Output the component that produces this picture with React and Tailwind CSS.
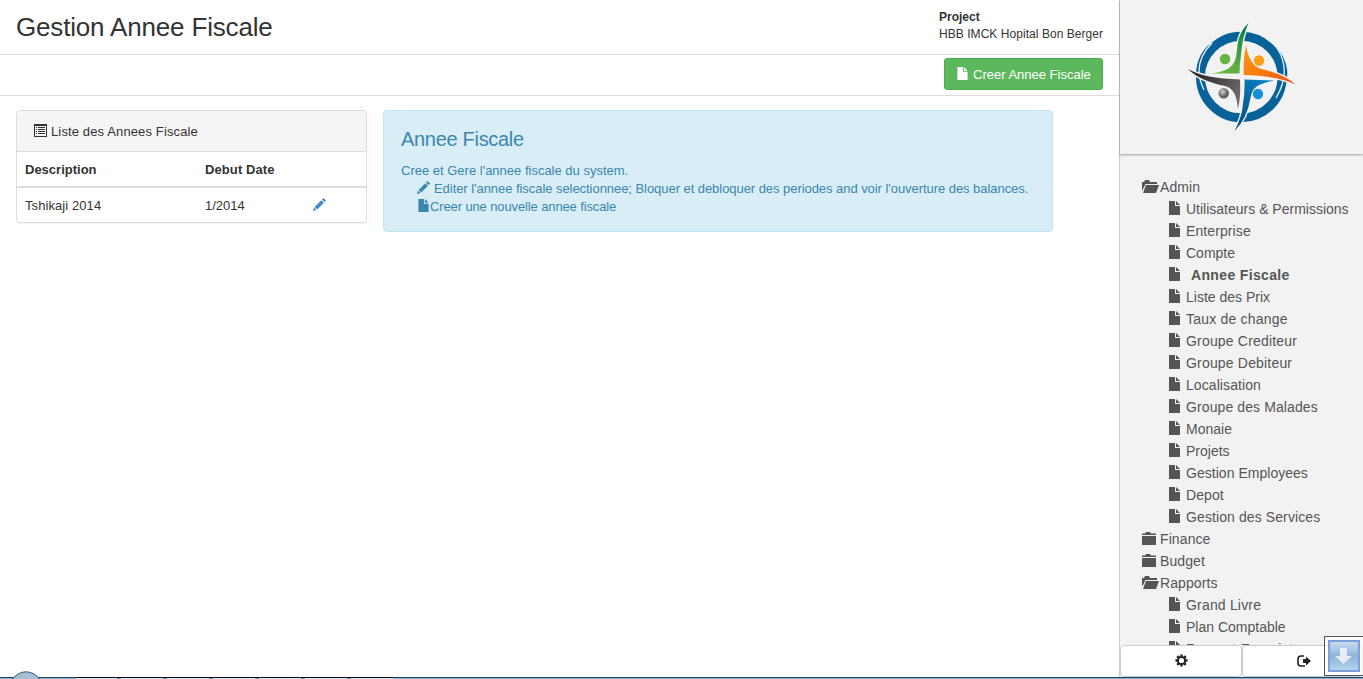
import React from 'react';

const FILE_ITEMS = [
  ['Utilisateurs & Permissions', ''],
  ['Enterprise', 'tracking-[0.1px]'],
  ['Compte', ''],
  ['Annee Fiscale', 'font-bold tracking-[0.35px] pl-[5px]'],
  ['Liste des Prix', ''],
  ['Taux de change', 'tracking-[0.2px]'],
  ['Groupe Crediteur', 'tracking-[0.18px]'],
  ['Groupe Debiteur', 'tracking-[0.18px]'],
  ['Localisation', 'tracking-[0.08px]'],
  ['Groupe des Malades', 'tracking-[0.1px]'],
  ['Monaie', ''],
  ['Projets', ''],
  ['Gestion Employees', 'tracking-[0.03px]'],
  ['Depot', 'tracking-[0.1px]'],
  ['Gestion des Services', 'tracking-[0.1px]'],
];

const REPORT_ITEMS = [
  ['Grand Livre', 'tracking-[0.18px]'],
  ['Plan Comptable', ''],
  ['Rapport Enregistrement', 'tracking-[0.1px]'],
];

function FileIcon({ className = '' }) {
  return (
    <svg className={`h-[14px] w-[11px] shrink-0 ${className}`} viewBox="0 0 11 14" fill="currentColor">
      <path d="M0 0h6v5h5v9H0z" />
      <path d="M7 0L11 4H7z" />
    </svg>
  );
}

function FolderOpen() {
  return (
    <svg className="-mt-[1px] h-[13px] w-[17px] shrink-0" viewBox="0 0 17 13" fill="currentColor">
      <path d="M0 10V2h2L3 0h4l1 2h7V4H3.500L0.500 10z" />
      <path d="M4 5h13l-3 8H1z" />
    </svg>
  );
}

function FolderClosed() {
  return (
    <svg className="-mt-[1px] h-[13px] w-[17px] shrink-0" viewBox="0 0 17 13" fill="currentColor">
      <path d="M0 3V1.500h3L4 0h4l1 1.500h5V3z" />
      <path d="M0 4h14v9H0z" />
    </svg>
  );
}

function Pencil({ className = '' }) {
  return (
    <svg className={`h-[13px] w-[13px] shrink-0 ${className}`} viewBox="0 0 13 13" fill="currentColor">
      <path d="M0 13L1 9.500L3.500 12z" />
      <path d="M1.600 8.900L8.300 2.200L10.900 4.800L4.200 11.500z" />
      <path d="M9 1.500L10.500 0L13 2.500L11.500 4.100z" />
    </svg>
  );
}

function ListIcon() {
  return (
    <svg className="-mt-[1px] h-[13px] w-[13px] shrink-0" viewBox="0 0 13 13">
      <path d="M0 0h13v13H0zM1 2v10h11V2z" fill="#333" fillRule="evenodd" />
      <path d="M2 3h1v1H2zM2 5h1v1H2zM2 7h1v1H2zM2 9h1v1H2zM4 3h7v1H4zM4 5h7v1H4zM4 7h7v1H4zM4 9h7v1H4z" fill="#333" />
    </svg>
  );
}

function Logo() {
  return (
    <svg className="h-[110px] w-[110px]" viewBox="1187 22 110 110">
      <defs>
        <linearGradient id="lg-green" x1="0" y1="1" x2="0.700" y2="0">
          <stop offset="0" stopColor="#72bf44" />
          <stop offset="0.500" stopColor="#58a83f" />
          <stop offset="1" stopColor="#008444" />
        </linearGradient>
        <linearGradient id="lg-orange" x1="0" y1="0" x2="1" y2="1">
          <stop offset="0" stopColor="#f89c1c" />
          <stop offset="0.500" stopColor="#f97a0c" />
          <stop offset="1" stopColor="#e94e1b" />
        </linearGradient>
        <linearGradient id="lg-grey" x1="0" y1="0" x2="1" y2="0.500">
          <stop offset="0" stopColor="#1c1a1b" />
          <stop offset="1" stopColor="#696567" />
        </linearGradient>
        <linearGradient id="lg-blue" x1="0.700" y1="0" x2="0" y2="1">
          <stop offset="0" stopColor="#0b7cc0" />
          <stop offset="1" stopColor="#024a78" />
        </linearGradient>
        <radialGradient id="lg-ball" cx="0.400" cy="0.350">
          <stop offset="0" stopColor="#d0d0d0" />
          <stop offset="1" stopColor="#5d5d5d" />
        </radialGradient>
      </defs>
      <circle cx="1241.300" cy="77" r="40.800" fill="none" stroke="#08629a" strokeWidth="9" />
      <path d="M1212 42Q1193 57 1197 82Q1200 52 1212 42z" fill="#05659b" />
      <path d="M1277 48Q1291 65 1286 83Q1286 62 1277 48z" fill="#05659b" />
      <path d="M1212 43Q1191 64 1204 90M1277 48Q1292 71 1276 98" fill="none" stroke="#f2f2f2" strokeWidth="1.300" />
      <g stroke="#f2f2f2" strokeWidth="2.800" paintOrder="stroke">
        <path d="M1248.500 23Q1239 32 1237.500 45C1236 61 1236 71 1210 73.500H1239.500Q1239.500 64 1241 55Q1242 37 1248.500 23z" fill="url(#lg-green)" />
        <path d="M1246 45Q1249 65 1261 69Q1284 74 1295.500 84.500Q1279 76 1243.800 75Q1243 58 1246 45z" fill="url(#lg-orange)" />
        <path d="M1188 69Q1204 78.500 1240 79.500Q1241 98 1237.800 109Q1237 89 1225 86Q1200 81 1188 69z" fill="url(#lg-grey)" />
        <path d="M1244.500 79.500L1274 80.500C1253 85 1253 89 1250.500 98Q1247 119 1234.500 131Q1242 117 1243 104Q1245 92 1244.500 79.500z" fill="url(#lg-blue)" />
      </g>
      <circle cx="1225" cy="59" r="5.200" fill="#65b544" />
      <circle cx="1259" cy="60.500" r="5.200" fill="#fba014" />
      <circle cx="1223.700" cy="93.300" r="5.200" fill="url(#lg-ball)" />
      <circle cx="1258" cy="94" r="5.200" fill="#1292d6" />
    </svg>
  );
}

function Gear() {
  return (
    <svg className="-mt-[1px] ml-[2px] h-[13px] w-[13px]" viewBox="0 0 13 13">
      <circle cx="6.500" cy="6.500" r="3.600" fill="none" stroke="#222" strokeWidth="2" />
      <path d="M6.500 0.500v2M6.500 10.500v2M0.500 6.500h2M10.500 6.500h2M2.200 2.200l1.500 1.500M9.300 9.300l1.500 1.500M2.200 10.800l1.500-1.500M9.300 3.700l1.500-1.500" stroke="#222" strokeWidth="2.400" />
    </svg>
  );
}

function Logout() {
  return (
    <svg className="-mt-[1px] ml-[3px] h-[12px] w-[14px]" viewBox="0 0 14 12">
      <path d="M7 1H4Q1 1 1 4V8Q1 11 4 11H8" fill="none" stroke="#222" strokeWidth="1.600" />
      <path d="M6 4h3V1.500l5 4.500l-5 4.500V8H6z" fill="#222" />
    </svg>
  );
}

function FileRow({ label, cls }) {
  return (
    <li className="flex h-[22px] items-center pl-[49px]">
      <FileIcon className="-mt-[3px] mr-[6px]" />
      <span className={`whitespace-nowrap ${cls}`}>{label}</span>
    </li>
  );
}

function FolderRow({ label, open }) {
  return (
    <li className="flex h-[22px] items-center pl-[22px]">
      <span className="flex w-[18px]">{open ? <FolderOpen /> : <FolderClosed />}</span>
      <span className="tracking-[0.1px]">{label}</span>
    </li>
  );
}

function Taskbar() {
  return (
    <svg className="absolute bottom-0 left-0 h-[8px] w-full" viewBox="0 0 1363 8" preserveAspectRatio="none">
      <path d="M0 5h1363v1H0z" fill="#1d4568" opacity="0" />
      <path d="M0 6h1363v1H0z" fill="#1d4568" />
      <path d="M0 7h1363v1H0z" fill="#83b4d6" />
      <path d="M76 6h317v1H76z" fill="#0a1118" />
      <path d="M76 7h317v1H76z" fill="#dcebf5" />
      <path d="M117 7h4v1h-4zM163 7h4v1h-4zM209 7h4v1h-4zM255 7h4v1h-4zM301 7h4v1h-4zM347 7h4v1h-4z" fill="#6b93ad" />
      <path d="M12 8.500Q18 0.800 26 0.800Q34 0.800 40 8.500z" fill="#a9bfd0" stroke="#2c5f8c" />
    </svg>
  );
}

export default function App() {
  return (
    <div className="relative flex h-[679px] w-[1363px] overflow-hidden bg-white font-['Liberation_Sans',Arial,sans-serif] text-[13px] text-[#333]">
      <main className="min-w-0 flex-1">
        <header className="flex h-[55px] justify-between border-b border-[#ddd] pl-4 pr-4">
          <h1 className="text-[26px] leading-[54px] tracking-[-0.17px]">Gestion Annee Fiscale</h1>
          <div className="w-[164px] whitespace-nowrap pt-[9px] text-[12px] leading-[17px]">
            <div className="font-bold">Project</div>
            <div className="tracking-[0.05px]">HBB IMCK Hopital Bon Berger</div>
          </div>
        </header>
        <div className="flex h-[41px] justify-end border-b border-[#ddd] pr-4 pt-[3px]">
          <button className="flex h-[32px] w-[159px] items-center rounded-[3px] border border-[#4cae4c] bg-[#5cb85c] pl-[12px] text-[13px] text-white">
            <FileIcon className="-mt-[2px] mr-[5px] !h-[13px]" />
            <span className="whitespace-nowrap pt-px">Creer Annee Fiscale</span>
          </button>
        </div>
        <div className="flex items-start gap-4 pl-4 pt-[14px]">
          <section className="h-[113px] w-[351px] overflow-hidden rounded-[4px] border border-[#ddd] shadow-[0_1px_1px_rgba(0,0,0,0.05)]">
            <div className="flex h-[41px] items-center gap-1 border-b border-[#ddd] bg-[#f5f5f5] pl-[17px]">
              <ListIcon />
              <span className="pt-[2px] tracking-[0.13px]">Liste des Annees Fiscale</span>
            </div>
            <div className="flex h-[36px] items-center border-b-2 border-[#ddd] pl-2 pt-[2px] font-bold">
              <span className="w-[180px]">Description</span>
              <span className="tracking-[0.1px]">Debut Date</span>
            </div>
            <div className="flex h-[35px] items-center pl-2">
              <span className="w-[180px] tracking-[0.08px]">Tshikaji 2014</span>
              <span className="w-[108px]">1/2014</span>
              <Pencil className="-mt-[2px] text-[#428bca]" />
            </div>
          </section>
          <section className="h-[122px] w-[670px] rounded-[4px] border border-[#bce8f1] bg-[#d9edf7] pl-[17px] pt-[16px] text-[#3a87ad]">
            <h2 className="text-[20px] leading-[24px] tracking-[-0.3px]">Annee Fiscale</h2>
            <p className="mt-[11px] leading-[18px]">Cree et Gere l'annee fiscale du system.</p>
            <p className="flex items-center pl-4 leading-[18px]">
              <Pencil className="-mt-[4px] mr-[4px]" />
              <span className="whitespace-nowrap tracking-[-0.052px]">Editer l'annee fiscale selectionnee; Bloquer et debloquer des periodes and voir l'ouverture des balances.</span>
            </p>
            <p className="flex items-center pl-[17px] leading-[18px]">
              <FileIcon className="-mt-[3px] mr-[1px] !h-[13px]" />
              <span className="tracking-[-0.12px]">Creer une nouvelle annee fiscale</span>
            </p>
          </section>
        </div>
      </main>
      <aside className="flex h-[677px] w-[244px] flex-col border-l border-[#ccc] bg-[#f2f2f2] text-[14px] text-[#555]">
        <div className="flex h-[154px] shrink-0 justify-center pt-[22px] shadow-[0_1px_2px_rgba(0,0,0,0.35)]">
          <Logo />
        </div>
        <ul className="min-h-0 flex-1 overflow-hidden pt-[22px]">
          <FolderRow label="Admin" open />
          {FILE_ITEMS.map(([label, cls]) => <FileRow key={label} label={label} cls={cls} />)}
          <FolderRow label="Finance" />
          <FolderRow label="Budget" />
          <FolderRow label="Rapports" open />
          {REPORT_ITEMS.map(([label, cls]) => <FileRow key={label} label={label} cls={cls} />)}
        </ul>
        <div className="flex h-[32px] shrink-0">
          <button className="flex w-[122px] items-center justify-center rounded-[4px] border border-[#ccc] bg-white"><Gear /></button>
          <button className="flex w-[122px] items-center justify-center rounded-[4px] border border-[#ccc] bg-white"><Logout /></button>
        </div>
      </aside>
      <div className="absolute left-[1324px] top-[636px] h-[40px] w-[40px] border border-[#555] bg-white/70 p-[3px]">
        <div className="flex h-[32px] w-[32px] items-center justify-center border-2 border-[#7a9fdd] bg-gradient-to-b from-[#c3d5e8]/85 via-[#8fb3d9] to-[#b3d3ee]">
          <svg className="h-[16px] w-[18px]" viewBox="0 0 18 16"><path d="M5 0h7v8h5l-8.500 8L0 8h5z" fill="#e6edf5" /></svg>
        </div>
      </div>
      <Taskbar />
    </div>
  );
}
